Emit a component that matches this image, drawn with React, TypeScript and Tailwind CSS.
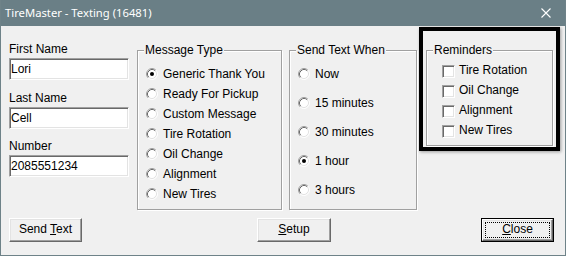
import React from 'react';

const face = 'bg-[#f0f0f0]';

function Radio({ checked }: { checked?: boolean }) {
  return (
    <svg width="12" height="12" viewBox="0 0 12 12" className="shrink-0">
      <circle cx="6" cy="6" r="5" fill="#fff" />
      <path d="M2.11 9.89A5.5 5.5 0 0 1 9.89 2.11" fill="none" stroke="#a0a0a0" />
      <path d="M9.89 2.11A5.5 5.5 0 0 1 2.11 9.89" fill="none" stroke="#fff" />
      <path d="M2.82 9.18A4.5 4.5 0 0 1 9.18 2.82" fill="none" stroke="#696969" />
      <path d="M9.18 2.82A4.5 4.5 0 0 1 2.82 9.18" fill="none" stroke="#e3e3e3" />
      {checked && <circle cx="6" cy="6" r="2" fill="#000" />}
    </svg>
  );
}

const Check = () => (
  <span className="size-[13px] shrink-0 bg-white border border-t-[#a0a0a0] border-l-[#a0a0a0] border-b-white border-r-white shadow-[inset_1px_1px_0_#696969,inset_-1px_-1px_0_#e3e3e3]" />
);

function Group({ title, className, children }: { title: string; className: string; children: React.ReactNode }) {
  return (
    <div className={`relative border border-[#a0a0a0] shadow-[inset_1px_1px_0_#fff,1px_1px_0_#fff] ${className}`}>
      <span className={`absolute -top-[8px] left-[6px] ${face} px-[1px] leading-[14px]`}>{title}</span>
      {children}
    </div>
  );
}

function Field({ label, value, className = '' }: { label: string; value: string; className?: string }) {
  return (
    <div className={className}>
      <div className="leading-[14px]">{label}</div>
      <div className="mt-[2px] h-[22px] w-[120px] bg-white border border-t-[#a0a0a0] border-l-[#a0a0a0] border-b-white border-r-white shadow-[inset_1px_1px_0_#696969,inset_-1px_-1px_0_#e3e3e3] pl-[1px] pt-[3px] leading-[14px]">
        {value}
      </div>
    </div>
  );
}

function Btn({ children, className = '', isDefault }: { children: React.ReactNode; className?: string; isDefault?: boolean }) {
  const raised =
    'border border-t-white border-l-white border-b-[#696969] border-r-[#696969] shadow-[inset_-1px_-1px_0_#a0a0a0,inset_1px_1px_0_#e3e3e3]';
  if (isDefault) {
    return (
      <div className={`h-[24px] border border-black ${className}`}>
        <div className={`h-full ${raised} bg-[#f0f0f0] p-[2px]`}>
          <div className="flex h-full items-center justify-center border border-dotted border-black pb-[2px] leading-[14px]">
            {children}
          </div>
        </div>
      </div>
    );
  }
  return (
    <div className={`flex h-[24px] items-center justify-center bg-[#f0f0f0] pb-[3px] leading-[14px] ${raised} ${className}`}>
      {children}
    </div>
  );
}

const messageTypes = ['Generic Thank You', 'Ready For Pickup', 'Custom Message', 'Tire Rotation', 'Oil Change', 'Alignment', 'New Tires'];
const sendWhen = ['Now', '15 minutes', '30 minutes', '1 hour', '3 hours'];
const reminders = ['Tire Rotation', 'Oil Change', 'Alignment', 'New Tires'];

export default function App() {
  return (
    <div className={`flex h-[256px] w-[566px] flex-col border-x border-b border-[#6e8288] ${face} font-['Liberation_Sans',Arial,sans-serif] text-[12px] text-black`}>
      <div className="flex h-[26px] shrink-0 items-center justify-between bg-[#6a7f86] pl-[4px] pr-[14px] text-white">
        <span className="font-['Noto_Sans',sans-serif] text-[11.25px] leading-[14px]">TireMaster - Texting (16481)</span>
        <svg width="10" height="10" viewBox="0 0 10 10">
          <path d="M0.5 0.5L9.5 9.5M9.5 0.5L0.5 9.5" stroke="#fff" strokeWidth="1.1" />
        </svg>
      </div>

      <div className="flex items-start">
        <div className="ml-[8px] mt-[16px] w-[120px]">
          <Field label="First Name" value="Lori" />
          <Field label="Last Name" value="Cell" className="mt-[11px]" />
          <Field label="Number" value="2085551234" className="mt-[10px]" />
        </div>

        <Group title="Message Type" className="ml-[8px] mt-[24px] h-[160px] w-[145px] pl-[8px] pt-[13px]">
          {messageTypes.map((t, i) => (
            <div key={t} className="flex h-[20px] items-center gap-[5px] leading-[14px]">
              <Radio checked={i === 0} />
              <span>{t}</span>
            </div>
          ))}
        </Group>

        <Group title="Send Text When" className="ml-[7px] mt-[24px] flex h-[160px] w-[128px] flex-col gap-[9px] pl-[8px] pt-[13px]">
          {sendWhen.map((t, i) => (
            <div key={t} className="flex h-[20px] items-center gap-[5px] leading-[14px]">
              <Radio checked={i === 3} />
              <span>{t}</span>
            </div>
          ))}
        </Group>

        <div className="ml-[2px] mt-[1px] h-[124px] w-[141px] border-4 border-black pl-[3px] pt-[19px] shadow-[1px_1px_3px_rgba(0,0,0,0.35)]">
          <Group title="Reminders" className="h-[96px] w-[127px] pl-[15px] pt-[9px]">
            {reminders.map(t => (
              <div key={t} className="flex h-[20px] items-center gap-[4px] leading-[14px]">
                <span className="mt-[3px] flex"><Check /></span>
                <span>{t}</span>
              </div>
            ))}
          </Group>
        </div>
      </div>

      <div className="ml-[8px] mt-[8px] flex">
        <Btn className="w-[73px]">
          <span>Send <u>T</u>ext</span>
        </Btn>
        <Btn className="ml-[175px] w-[74px]">
          <span><u>S</u>etup</span>
        </Btn>
        <Btn className="ml-[150px] w-[73px]" isDefault>
          <span><u>C</u>lose</span>
        </Btn>
      </div>
    </div>
  );
}
